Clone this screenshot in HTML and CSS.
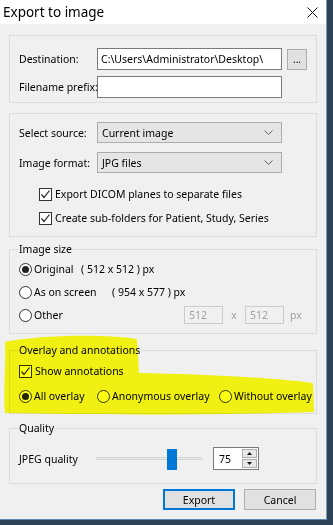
FILE: index.html
```html
<!DOCTYPE html>
<html lang="en">
<head>
    <meta charset="UTF-8">
    <meta name="viewport" content="width=device-width, initial-scale=1.0">
    <title>Export to image</title>
    <link rel="stylesheet" href="styles.css">
</head>
<body>
    <div class="dialog">
        <div class="titlebar">
            <span class="title">Export to image</span>
            <svg class="close" width="11" height="11" viewBox="0 0 11 11">
                <path d="M0.5 0.5 L10.5 10.5 M10.5 0.5 L0.5 10.5" stroke="#111" stroke-width="1" fill="none"/>
            </svg>
        </div>

        <div class="content">
            <!-- Destination -->
            <fieldset class="group group-dest">
                <div class="field-row">
                    <label class="field-label" for="destination">Destination:</label>
                    <input type="text" id="destination" class="text-input" value="C:\Users\Administrator\Desktop\">
                    <button class="browse">...</button>
                </div>
                <div class="field-row">
                    <label class="field-label" for="prefix">Filename prefix:</label>
                    <input type="text" id="prefix" class="text-input">
                </div>
            </fieldset>

            <!-- Source and format -->
            <fieldset class="group group-source">
                <div class="field-row">
                    <span class="field-label">Select source:</span>
                    <div class="select">
                        <span>Current image</span>
                        <svg width="9" height="5" viewBox="0 0 9 5"><path d="M0.5 0.5 L4.5 4.5 L8.5 0.5" stroke="#666" fill="none"/></svg>
                    </div>
                </div>
                <div class="field-row">
                    <span class="field-label">Image format:</span>
                    <div class="select">
                        <span>JPG files</span>
                        <svg width="9" height="5" viewBox="0 0 9 5"><path d="M0.5 0.5 L4.5 4.5 L8.5 0.5" stroke="#666" fill="none"/></svg>
                    </div>
                </div>
                <div class="check-list">
                    <div class="opt-row"><span class="checkbox"><svg width="11" height="11" viewBox="0 0 11 11"><path d="M1.5 5.5 L4 8.5 L9.5 1.5" stroke="#222" stroke-width="1.2" fill="none"/></svg></span>Export DICOM planes to separate files</div>
                    <div class="opt-row"><span class="checkbox"><svg width="11" height="11" viewBox="0 0 11 11"><path d="M1.5 5.5 L4 8.5 L9.5 1.5" stroke="#222" stroke-width="1.2" fill="none"/></svg></span>Create sub-folders for Patient, Study, Series</div>
                </div>
            </fieldset>

            <!-- Image size -->
            <fieldset class="group group-size">
                <legend>Image size</legend>
                <div class="opt-row"><span class="radio on"></span><span class="size-name name-orig">Original</span><span>( 512 x 512 ) px</span></div>
                <div class="opt-row"><span class="radio"></span><span class="size-name name-screen">As on screen</span><span>( 954 x 577 ) px</span></div>
                <div class="opt-row">
                    <span class="radio"></span><span class="size-name name-other">Other</span>
                    <span class="num-input">512</span>
                    <span class="dim-sep">x</span>
                    <span class="num-input">512</span>
                    <span class="dim-unit">px</span>
                </div>
            </fieldset>

            <!-- Overlay -->
            <fieldset class="group group-overlay">
                <legend>Overlay and annotations</legend>
                <div class="opt-row"><span class="checkbox"><svg width="11" height="11" viewBox="0 0 11 11"><path d="M1.5 5.5 L4 8.5 L9.5 1.5" stroke="#222" stroke-width="1.2" fill="none"/></svg></span>Show annotations</div>
                <div class="opt-row">
                    <span class="overlay-opt opt-all"><span class="radio on"></span>All overlay</span>
                    <span class="overlay-opt opt-anon"><span class="radio"></span>Anonymous overlay</span>
                    <span class="overlay-opt"><span class="radio"></span>Without overlay</span>
                </div>
            </fieldset>

            <!-- Quality -->
            <fieldset class="group group-quality">
                <legend>Quality</legend>
                <div class="quality-row">
                    <span class="quality-label">JPEG quality</span>
                    <div class="slider">
                        <div class="slider-track"></div>
                        <div class="slider-thumb"></div>
                    </div>
                    <div class="spin">
                        <span class="spin-value">75</span>
                        <div class="spin-buttons">
                            <span class="spin-btn"><svg width="5" height="3" viewBox="0 0 5 3"><path d="M2.5 0 L5 3 L0 3 Z" fill="#111"/></svg></span>
                            <span class="spin-btn"><svg width="5" height="3" viewBox="0 0 5 3"><path d="M0 0 L5 0 L2.5 3 Z" fill="#111"/></svg></span>
                        </div>
                    </div>
                </div>
            </fieldset>

            <div class="actions">
                <button class="btn btn-default">Export</button>
                <button class="btn">Cancel</button>
            </div>
        </div>

        <!-- marker highlight drawn over the overlay group -->
        <svg class="highlight" width="333" height="525" viewBox="0 0 333 525">
            <path d="M5 342 C30 336 100 333 137 339 L139 373 C190 374 270 377 313 383 L314 412 C220 415 90 415 5 413 C3 395 6 365 5 342 Z" fill="#ffff14"/>
        </svg>
    </div>
</body>
</html>
```

FILE: styles.css
```css
* {
    box-sizing: border-box;
}
body {
    margin: 0;
    background-color: #2d4157;
    font-family: "Noto Sans", sans-serif;
    font-size: 10.5px;
    color: #000;
    white-space: nowrap;
}
.dialog {
    position: relative;
    width: 327px;
    height: 520px;
    background-color: #f0f0f0;
    border-right: 1px solid #7d98b3;
    border-bottom: 1px solid #5f88b3;
}
.titlebar {
    height: 24px;
    background-color: #fff;
    display: flex;
    align-items: center;
    justify-content: space-between;
    padding: 0 8px 0 3px;
}
.title {
    font-size: 13.5px;
}
.content {
    padding: 11px 9px 0 9px;
}
.group {
    margin: 0;
    border: 1px solid #dcdcdc;
    min-width: 0;
    padding: 0 9px;
}
.group legend {
    padding: 0 1px;
    line-height: 16px;
    margin-left: -1px;
}
.group-dest {
    padding-top: 12px;
    padding-bottom: 4px;
}
.group-source {
    margin-top: 10px;
    padding-top: 8px;
    padding-bottom: 8px;
}
.group-size {
    margin-top: 4px;
    padding-top: 2px;
    padding-bottom: 8px;
}
.group-overlay {
    margin-top: 8px;
    padding-top: 3px;
    padding-bottom: 7px;
}
.group-quality {
    margin-top: 6px;
    padding-top: 11px;
    padding-bottom: 13px;
}
.field-row {
    display: flex;
    align-items: center;
}
.field-row + .field-row {
    margin-top: 6px;
}
.group-source .field-row + .field-row {
    margin-top: 9px;
}
.field-label {
    width: 78px;
    flex: none;
}
.text-input {
    width: 185px;
    height: 22px;
    border: 1px solid #7a7a7a;
    background: #fff;
    padding: 0 3px;
    font-family: "Noto Sans", sans-serif;
    font-size: 10.5px;
    margin: 0;
}
.browse {
    width: 20px;
    height: 21px;
    margin-left: 5px;
    padding: 0;
    border: 1px solid #adadad;
    background-color: #e1e1e1;
    font-family: "Noto Sans", sans-serif;
    font-size: 10px;
    line-height: 12px;
}
.select {
    width: 185px;
    height: 21px;
    border: 1px solid #acacac;
    background-color: #e5e5e5;
    display: flex;
    align-items: center;
    justify-content: space-between;
    padding: 0 8px 0 4px;
}
.check-list {
    margin-top: 11px;
    padding-left: 20px;
}
.opt-row {
    display: flex;
    align-items: center;
    height: 20px;
}
.check-list .opt-row + .opt-row {
    margin-top: 4px;
}
.group-size .opt-row + .opt-row {
    margin-top: 3px;
}
.group-overlay .opt-row + .opt-row {
    margin-top: 5px;
}
.checkbox {
    width: 13px;
    height: 13px;
    border: 1px solid #333;
    background-color: #fff;
    display: flex;
    align-items: center;
    justify-content: center;
    margin-right: 3px;
    flex: none;
}
.radio {
    width: 13px;
    height: 13px;
    border: 1px solid #333;
    border-radius: 50%;
    background-color: #fff;
    display: flex;
    align-items: center;
    justify-content: center;
    margin-right: 2px;
    flex: none;
}
.radio.on::after {
    content: "";
    width: 7px;
    height: 7px;
    border-radius: 50%;
    background-color: #222;
}
.size-name {
    flex: none;
}
.name-orig {
    width: 47px;
}
.name-screen {
    width: 78px;
}
.name-other {
    width: 150px;
}
.num-input {
    width: 39px;
    height: 18px;
    border: 1px solid #cccccc;
    color: #a0a0a0;
    padding-left: 4px;
    display: flex;
    align-items: center;
}
.dim-sep {
    width: 22px;
    text-align: center;
    color: #a0a0a0;
}
.dim-unit {
    margin-left: 6px;
    color: #a0a0a0;
}
.overlay-opt {
    display: flex;
    align-items: center;
    flex: none;
}
.opt-all {
    width: 78px;
}
.opt-anon {
    width: 122px;
}
.quality-row {
    display: flex;
    align-items: center;
    height: 23px;
}
.quality-label {
    width: 77px;
    flex: none;
}
.slider {
    position: relative;
    width: 106px;
    height: 23px;
    display: flex;
    align-items: center;
}
.slider-track {
    width: 100%;
    height: 3px;
    background-color: #e7e7e7;
    border: 1px solid #d6d6d6;
}
.slider-thumb {
    position: absolute;
    left: 71px;
    top: 2px;
    width: 10px;
    height: 21px;
    background-color: #0078d7;
}
.spin {
    width: 46px;
    height: 23px;
    margin-left: 11px;
    border: 1px solid #7a7a7a;
    background-color: #fff;
    display: flex;
    align-items: center;
    padding: 1px;
}
.spin-value {
    flex: 1;
    padding-left: 4px;
}
.spin-buttons {
    display: flex;
    flex-direction: column;
    gap: 1px;
}
.spin-btn {
    width: 15px;
    height: 9px;
    border: 1px solid #adadad;
    background-color: #e8e8e8;
    display: flex;
    align-items: center;
    justify-content: center;
}
.actions {
    display: flex;
    justify-content: flex-end;
    gap: 9px;
    margin-top: 5px;
    padding-right: 1px;
}
.btn {
    width: 72px;
    height: 21px;
    border: 1px solid #adadad;
    background-color: #e1e1e1;
    font-family: "Noto Sans", sans-serif;
    font-size: 10.5px;
    padding: 0;
}
.btn-default {
    border: 2px solid #0078d7;
}
.highlight {
    position: absolute;
    left: 0;
    top: 0;
    pointer-events: none;
    mix-blend-mode: multiply;
}
```
